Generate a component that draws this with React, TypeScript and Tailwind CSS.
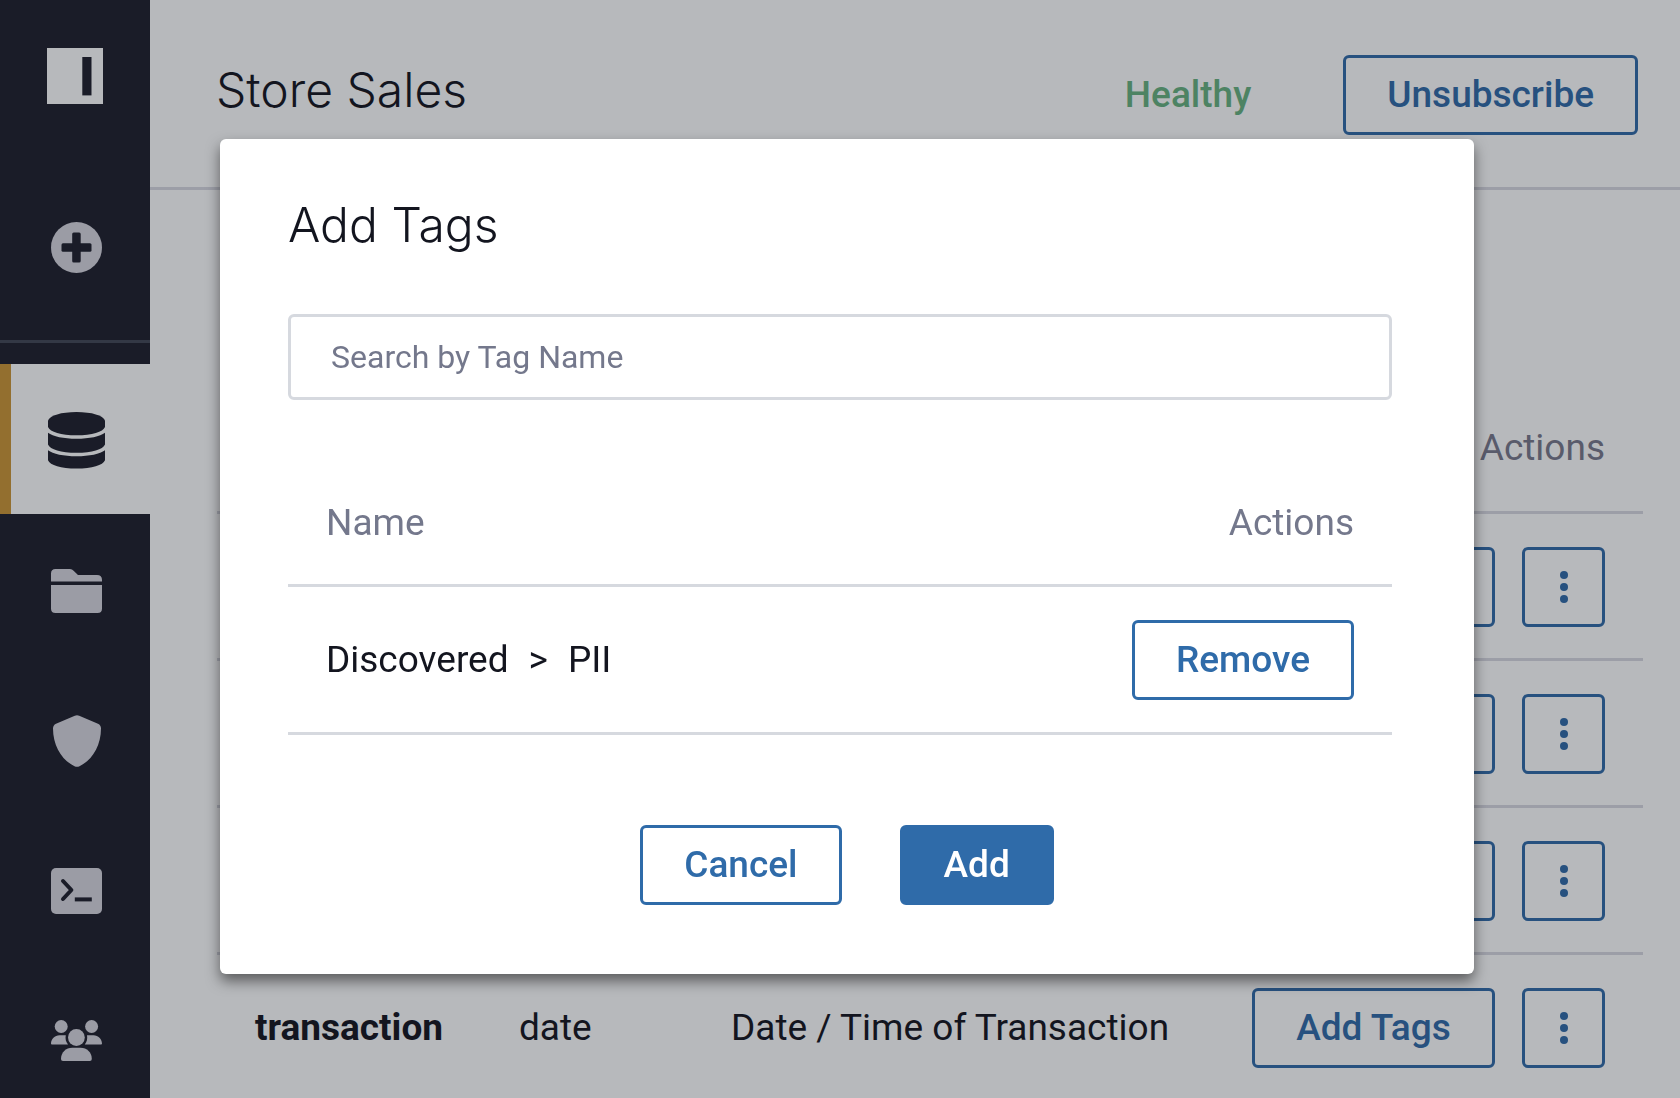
import { useState } from "react";
import clsx from "clsx";

interface Column {
  name: string;
  type: string;
  description: string;
}

const columns: Column[] = [
  { name: "", type: "", description: "" },
  { name: "", type: "", description: "" },
  { name: "", type: "", description: "" },
  {
    name: "transaction",
    type: "date",
    description: "Date / Time of Transaction",
  },
];

const Logo = () => (
  <svg viewBox="0 0 56 56" className="size-14" aria-hidden="true">
    <path fill="#b7b9bc" d="M0 0h56v56H0z" />
    <path fill="#1a1c28" d="M35.3 9h9.2v38.4h-9.2z" />
  </svg>
);

const PlusIcon = () => (
  <svg viewBox="0 0 51 51" className="size-[51px]" aria-hidden="true">
    <circle cx="25.5" cy="25.5" r="25.5" fill="#9b9ca5" />
    <rect x="10.5" y="21.3" width="30" height="8.5" rx="1.5" fill="#1a1c28" />
    <rect x="21.2" y="10.5" width="8.5" height="30" rx="1.5" fill="#1a1c28" />
  </svg>
);

const DatabaseIcon = () => (
  <svg viewBox="0 0 57 57" width="57" height="57" fill="#1a1c28" aria-hidden="true">
    <path d="M0 8.500C2 3.500 13 0 28.500 0S55 3.500 57 8.500V15c-2 5-13 8.300-28.500 8.300S2 20 0 15z" />
    <path d="M0 20.700c5 3.800 15.500 6 28.500 6s23.500-2.200 28.500-6v11.800c-2 5-13 8.300-28.500 8.300S2 37.500 0 32.500z" />
    <path d="M0 38.300c5 3.800 15.500 6 28.500 6s23.500-2.200 28.500-6v10c-2 5-13 8.300-28.500 8.300S2 53.300 0 48.300z" />
  </svg>
);

const FolderIcon = () => (
  <svg viewBox="0 0 51 44" width="51" height="44" fill="#9b9ca5" aria-hidden="true">
    <path d="M0 12.500V4.500Q0 0 4.500 0H19q2.200 0 3.600 1.700L27 6h19q5 0 5 5v1.500z" />
    <path d="M0 16h51v23.500q0 4.500-4.500 4.500h-42Q0 44 0 39.500z" />
  </svg>
);

const ShieldIcon = () => (
  <svg viewBox="0 0 48 52" width="48" height="52" fill="#9b9ca5" aria-hidden="true">
    <path d="M21.800.700Q24-.3 26.200.700L45 8.800q3 1.400 3 4.700c0 18-9.500 32-21.500 37.700q-2.500 1.200-5 0C9.500 45.500 0 31.500 0 13.500Q0 10.200 3 8.800z" />
  </svg>
);

const TerminalIcon = () => (
  <svg viewBox="0 0 51 46" width="51" height="46" aria-hidden="true">
    <rect width="51" height="46" rx="5" fill="#9b9ca5" />
    <g fill="none" stroke="#1a1c28" strokeWidth="4">
      <path d="m12 13 8.400 9L12 31" strokeLinecap="round" strokeLinejoin="round" />
      <path d="M23.800 31.400h17" />
    </g>
  </svg>
);

const UsersIcon = () => (
  <svg viewBox="0 0 51 41" width="51" height="41" fill="#9b9ca5" aria-hidden="true">
    <circle cx="10.200" cy="6.500" r="6.500" />
    <circle cx="40.600" cy="6.500" r="6.500" />
    <circle cx="25.400" cy="17.500" r="8.400" />
    <path d="M0 23.800C0 19 3.800 15.300 8.500 15.300h6.300c-.7 3.500 0 6.500 2.200 9.200H.9q-.9 0-.9-.7z" />
    <path d="M51 23.800c0-4.800-3.800-8.500-8.500-8.500h-6.500c.6 3.500 0 6.500-2.200 9.200h16.300q.9 0 .9-.7z" />
    <path d="M10 39c0-6.500 4.800-11.200 11.300-11.200h8.200c6.500 0 11.300 4.700 11.300 11.200q0 2-2 2H12q-2 0-2-2z" />
  </svg>
);

const KebabIcon = () => (
  <svg viewBox="0 0 8 32" width="8" height="32" fill="#27517f" aria-hidden="true">
    <circle cx="4" cy="4" r="4" />
    <circle cx="4" cy="16" r="4" />
    <circle cx="4" cy="28" r="4" />
  </svg>
);

const navItems = [
  { label: "Data", icon: <DatabaseIcon />, active: true },
  { label: "Projects", icon: <FolderIcon />, active: false },
  { label: "Policies", icon: <ShieldIcon />, active: false },
  { label: "Query", icon: <TerminalIcon />, active: false },
  { label: "People", icon: <UsersIcon />, active: false },
];

const Sidebar = () => (
  <nav className="flex w-[150px] shrink-0 flex-col items-center bg-[#1a1c28]">
    <a href="#home" aria-label="Home" className="mt-12">
      <Logo />
    </a>
    <button
      type="button"
      aria-label="New"
      className="mt-[118px] flex w-full justify-center pl-[3px]"
    >
      <PlusIcon />
    </button>
    <div className="mt-[67px] mb-[21px] h-[3px] w-full shrink-0 bg-[#333845]" />
    {navItems.map((item) => (
      <a
        key={item.label}
        href="#nav"
        aria-label={item.label}
        className={clsx(
          "flex h-[150px] w-full shrink-0 items-center justify-center border-l-[11px] pt-[3px] pr-2",
          item.active
            ? "border-[#936f2f] bg-[#b7b9bc]"
            : "border-transparent"
        )}
      >
        {item.icon}
      </a>
    ))}
  </nav>
);

const ColumnTable = () => (
  <table className="w-full table-fixed text-left text-[37px] leading-[44px]">
    <colgroup>
      <col className="w-[264px]" />
      <col className="w-[212px]" />
      <col />
      <col className="w-[429px]" />
    </colgroup>
    <thead>
      <tr className="h-[126px] border-b-[3px] border-[#9c9ea7] text-[#595b6b]">
        <td colSpan={3} />
        <th className="px-[38px] text-right font-normal">Actions</th>
      </tr>
    </thead>
    <tbody>
      {columns.map((column, i) => (
        <tr key={i} className="h-[147px] border-b-[3px] border-[#9c9ea7]">
          <td className="pt-0.5 pl-[38px] font-bold">{column.name}</td>
          <td className="pt-0.5 pl-[38px]">{column.type}</td>
          <td className="pt-0.5 pl-[38px] whitespace-nowrap">
            {column.description}
          </td>
          <td className="px-[38px] pt-0.5">
            <div className="flex justify-end gap-[27px]">
              <button
                type="button"
                className="h-20 flex-1 rounded-md border-[3px] border-[#27517f] font-medium text-[#27517f]"
              >
                Add Tags
              </button>
              <button
                type="button"
                aria-label="More"
                className="flex h-20 w-[83px] items-center justify-center rounded-md border-[3px] border-[#27517f]"
              >
                <KebabIcon />
              </button>
            </div>
          </td>
        </tr>
      ))}
    </tbody>
  </table>
);

const AddTagsDialog = () => {
  const [search, setSearch] = useState("");

  return (
    <div className="fixed inset-0 flex items-start pt-[139px] pr-[206px] pl-[220px]">
      <div
        role="dialog"
        aria-labelledby="dialog-title"
        className="w-full rounded-md bg-white pt-14 pb-[69px] shadow-[0_7px_14px_rgba(0,0,0,0.5)]"
      >
        <div className="pr-[82px] pl-[68px]">
          <h2
            id="dialog-title"
            className="font-['Inter'] text-5xl leading-[60px] font-light"
          >
            Add Tags
          </h2>
          <input
            type="text"
            aria-label="Search by Tag Name"
            placeholder="Search by Tag Name"
            value={search}
            onChange={(e) => setSearch(e.target.value)}
            className="mt-[59px] h-[86px] w-full rounded-md border-[3px] border-[#d6d9df] px-10 text-[32px] placeholder:text-[#74788c]"
          />
          <table className="mt-[62px] w-full text-[37px] leading-[44px]">
            <thead>
              <tr className="h-[123px] border-b-[3px] border-[#d6d9df] text-[#74788c]">
                <th className="pl-[38px] text-left font-normal">Name</th>
                <th className="pr-[38px] text-right font-normal">Actions</th>
              </tr>
            </thead>
            <tbody>
              <tr className="h-[148px] border-b-[3px] border-[#d6d9df]">
                <td className="pt-0.5 pl-[38px]">
                  <div className="flex gap-5">
                    <span>Discovered</span>
                    <span>&gt;</span>
                    <span>PII</span>
                  </div>
                </td>
                <td className="pt-0.5 pr-[38px] text-right">
                  <button
                    type="button"
                    className="h-20 rounded-md border-[3px] border-[#2f6ba9] px-[41px] font-medium text-[#2f6ba9]"
                  >
                    Remove
                  </button>
                </td>
              </tr>
            </tbody>
          </table>
        </div>
        <div className="mt-[90px] flex justify-center gap-[58px] text-[37px] leading-[44px] font-medium">
          <button
            type="button"
            className="h-20 rounded-md border-[3px] border-[#2f6ba9] px-[41px] text-[#2f6ba9]"
          >
            Cancel
          </button>
          <button
            type="button"
            className="h-20 rounded-md border-[3px] border-[#2f6ba9] bg-[#2f6ba9] px-[41px] text-white"
          >
            Add
          </button>
        </div>
      </div>
    </div>
  );
};

const App = () => {
  return (
    <div className="flex h-screen overflow-hidden bg-[#b7b9bc] font-['Roboto',sans-serif] text-[#13151f]">
      <Sidebar />
      <div className="min-w-0 flex-1">
        <header className="flex h-[190px] items-center border-b-[3px] border-[#9c9ea7] pt-[3px] pr-[42px] pl-[66px]">
          <h1 className="mr-auto pb-2.5 font-['Inter'] text-5xl leading-[60px] font-light">
            Store Sales
          </h1>
          <span className="mr-[92px] text-[37px] leading-[44px] font-medium text-[#4d8363]">
            Healthy
          </span>
          <button
            type="button"
            className="h-20 rounded-md border-[3px] border-[#27517f] px-[41px] text-[37px] leading-[44px] font-medium text-[#27517f]"
          >
            Unsubscribe
          </button>
        </header>
        <main className="pt-[196px] pr-[37px] pl-[67px]">
          <ColumnTable />
        </main>
      </div>
      <AddTagsDialog />
    </div>
  );
};

export default App;
